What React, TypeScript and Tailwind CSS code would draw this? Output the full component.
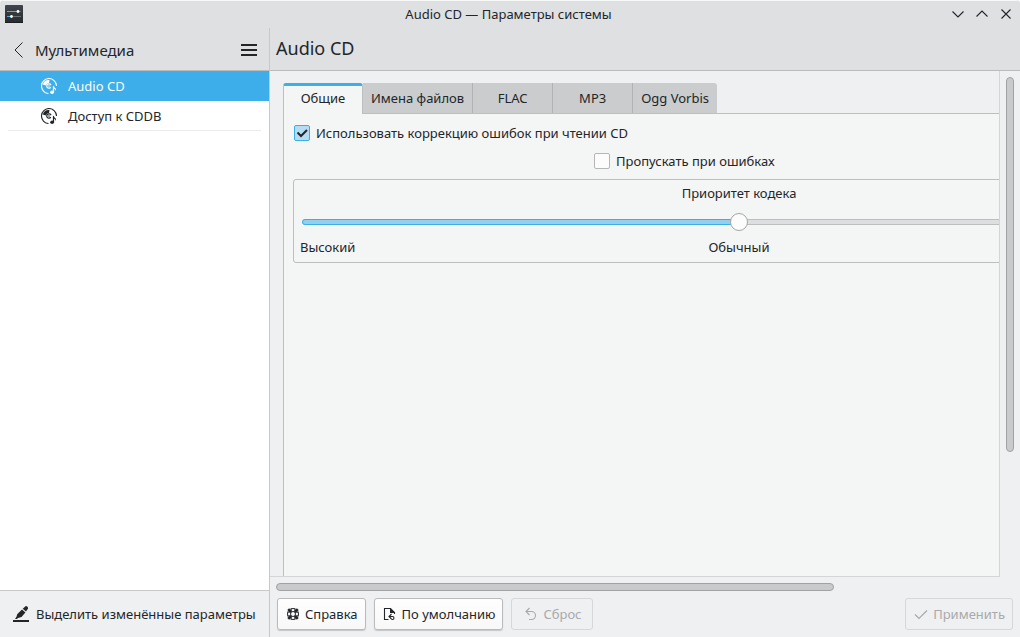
import React, { useState } from 'react';
import clsx from 'clsx';

const modules = ['Audio CD', 'Доступ к CDDB'];
const tabs = ['Общие', 'Имена файлов', 'FLAC', 'MP3', 'Ogg Vorbis'];

function AppIcon() {
  return (
    <svg width="18" height="18" viewBox="0 0 18 18" aria-hidden="true">
      <defs>
        <linearGradient id="app-bg" x1="0" y1="0" x2="0" y2="1">
          <stop offset="0" stopColor="#3f464c" />
          <stop offset="1" stopColor="#272b2f" />
        </linearGradient>
      </defs>
      <rect width="18" height="18" rx="1" fill="url(#app-bg)" />
      <path d="M0 17.5h18" stroke="#1c1f22" />
      <path d="M2 6.5h10M2 11.5h4" stroke="#3daee9" />
      <path d="M14 6.5h2M8 11.5h8" stroke="#6b7277" />
      <circle cx="13" cy="6.5" r="1.4" fill="#fff" />
      <circle cx="6.5" cy="11.5" r="1.4" fill="#fff" />
    </svg>
  );
}

function DiscIcon() {
  return (
    <svg width="16" height="16" viewBox="0 0 16 16" fill="none" aria-hidden="true">
      <path d="M7.500 15.500A7.500 7.500 0 1 1 15.500 8" stroke="currentColor" strokeWidth="1.100" />
      <path d="M1.800 6.500A6.200 6.200 0 0 1 8.500 2L8 5A3 3 0 0 0 5 7.500z" fill="currentColor" />
      <path d="M9.800 9.200A2.200 2.200 0 1 1 10 7.200" stroke="currentColor" strokeWidth="1.200" />
      <circle cx="8" cy="8" r=".8" fill="currentColor" />
      <path d="M12.500 14.500V8" stroke="currentColor" strokeWidth="1.200" />
      <path d="M12 7.500c.5 1.800 3.800 2.300 3 5.500-.4-1.500-1.500-2.200-3-2.500z" fill="currentColor" />
      <ellipse cx="11.100" cy="14.200" rx="1.900" ry="1.700" fill="currentColor" />
    </svg>
  );
}

function MarkerIcon() {
  return (
    <svg width="16" height="16" viewBox="0 0 16 16" fill="currentColor" aria-hidden="true">
      <path d="M0 14h16v2H0z" />
      <path d="M12.800 0c1.400.2 2.300 1.200 2.300 2.500L13 5.500 9.700 2.700z" />
      <path d="m9 3.500 3.400 2.900-3.900 4.600-3.400.9L3.800 13H2l1.500-2.200.7-2.600z" />
    </svg>
  );
}

function HelpIcon() {
  return (
    <svg width="16" height="16" viewBox="0 0 16 16" fill="none" stroke="currentColor" aria-hidden="true">
      <circle cx="8" cy="8" r="5.500" />
      <circle cx="8" cy="8" r="2.500" />
      <path d="m3.200 3.200 3 3M12.800 3.200l-3 3M12.800 12.800l-3-3M3.200 12.800l3-3" strokeWidth="2.600" />
      <path d="M6.500 2.500v3M9.500 2.500v3M6.500 10.500v3M9.500 10.500v3M2.500 6.500h3M2.500 9.500h3M10.500 6.500h3M10.500 9.500h3" strokeWidth=".6" />
    </svg>
  );
}

function DefaultsIcon() {
  return (
    <svg width="16" height="16" viewBox="0 0 16 16" fill="none" stroke="currentColor" aria-hidden="true">
      <path d="M6.500 13.500h-4v-11h6l4 4V8" strokeWidth="1.100" />
      <path d="M8 2v5h5z" fill="currentColor" stroke="none" />
      <path d="M9.500 8 7 10.500 9.500 13M7 10.500h3.500a1.500 1.500 0 0 1 0 3H9.500" strokeWidth="1.100" />
    </svg>
  );
}

function ResetIcon() {
  return (
    <svg width="16" height="16" viewBox="0 0 16 16" fill="none" stroke="currentColor" aria-hidden="true">
      <path d="M6.500 2 3 5.500 6.500 9M3 5.500h5.500a4 4 0 0 1 0 8H6" strokeWidth="1.100" />
    </svg>
  );
}

function ApplyIcon() {
  return (
    <svg width="16" height="16" viewBox="0 0 16 16" fill="none" stroke="currentColor" aria-hidden="true">
      <path d="m2 8.500 4 4 8-8" strokeWidth="1.200" />
    </svg>
  );
}

interface ActionButtonProps {
  icon: React.ReactNode;
  label: string;
  disabled?: boolean;
}

function ActionButton({ icon, label, disabled }: ActionButtonProps) {
  return (
    <button
      disabled={disabled}
      className={clsx(
        'flex h-8 min-w-[82px] items-center justify-center gap-1 rounded-[3px] border px-[7px] whitespace-nowrap',
        disabled
          ? 'border-[#d5d7d8] bg-[#eff0f1] text-[#a8aaac]'
          : 'border-[#b9bbbd] bg-linear-to-b from-[#fefefe] to-[#f8f8f8] shadow-[0_1px_1px_#c4c6c8]'
      )}
    >
      {icon}
      {label}
    </button>
  );
}

interface CheckOptionProps {
  label: string;
  defaultChecked?: boolean;
}

function CheckOption({ label, defaultChecked }: CheckOptionProps) {
  return (
    <label className="flex h-5 w-fit items-center gap-1.5">
      <span className="grid size-4">
        <input
          type="checkbox"
          defaultChecked={defaultChecked}
          className="peer size-4 appearance-none rounded-[2px] border border-[#b4b6b8] bg-[#fcfcfc] [grid-area:1/1] checked:border-[#3daee9] checked:bg-[#b5dcf1]"
        />
        <svg
          viewBox="0 0 16 16"
          fill="none"
          className="pointer-events-none invisible size-4 [grid-area:1/1] peer-checked:visible"
        >
          <path d="m3.500 7.500 3.500 3.500 6-6" stroke="#232629" strokeWidth="2" />
        </svg>
      </span>
      {label}
    </label>
  );
}

function Sidebar() {
  const [current, setCurrent] = useState(0);

  return (
    <aside className="flex w-[270px] shrink-0 flex-col border-r border-[#c6c8ca] bg-white">
      <header className="flex h-[43px] items-center border-b border-[#b9bbbd] bg-[#dee0e2] pt-px pr-3 pl-[11px]">
        <button className="flex flex-1 items-center gap-2 text-[15px] leading-6">
          <svg width="16" height="16" viewBox="0 0 16 16" fill="none" stroke="currentColor" aria-hidden="true">
            <path d="M11.500.5 4 8l7.500 7.500" />
          </svg>
          Мультимедиа
        </button>
        <button aria-label="Меню">
          <svg width="16" height="16" viewBox="0 0 16 16" fill="currentColor" aria-hidden="true">
            <path d="M0 2h16v2H0zM0 7h16v2H0zM0 12h16v2H0z" />
          </svg>
        </button>
      </header>

      <nav className="flex-1">
        {modules.map((name, i) => (
          <button
            key={name}
            onClick={() => setCurrent(i)}
            className={clsx('block w-full', i === current ? 'bg-[#3daee9] text-[#fcfcfc]' : 'px-2')}
          >
            <span
              className={clsx(
                'flex h-[30px] items-center gap-[11px]',
                i === current ? 'pl-[41px]' : 'border-b border-[#eaebec] pl-[33px]'
              )}
            >
              <DiscIcon />
              {name}
            </span>
          </button>
        ))}
      </nav>

      <footer className="border-t border-[#c6c8ca] bg-[#eff0f1]">
        <button className="flex h-[46px] items-center gap-[7px] pl-[13px] whitespace-nowrap">
          <MarkerIcon />
          Выделить изменённые параметры
        </button>
      </footer>
    </aside>
  );
}

function CodecPriority() {
  const [value, setValue] = useState(50);

  return (
    <fieldset className="mt-2 flex h-[84px] flex-col rounded-[3px] border border-[#bcbebf] px-1.5 pt-[3px]">
      <label htmlFor="priority" className="text-center">
        Приоритет кодека
      </label>
      <div className="mx-0.5 grid h-[38px] items-center">
        <div className="h-1.5 rounded-full border border-[#bcbebf] bg-[#dcdedf] [grid-area:1/1]">
          <div
            className="-m-px h-1.5 rounded-full border border-[#3daee9] bg-[#93cfee]"
            style={{ width: `${value}%` }}
          />
        </div>
        <input
          id="priority"
          type="range"
          value={value}
          onChange={(e) => setValue(Number(e.target.value))}
          className="h-[18px] appearance-none bg-transparent [grid-area:1/1] [&::-webkit-slider-thumb]:size-[18px] [&::-webkit-slider-thumb]:appearance-none [&::-webkit-slider-thumb]:rounded-full [&::-webkit-slider-thumb]:border [&::-webkit-slider-thumb]:border-[#a3a5a7] [&::-webkit-slider-thumb]:bg-[#fcfcfc]"
        />
      </div>
      <div className="-mt-1 grid grid-cols-3">
        <span>Высокий</span>
        <span className="text-center">Обычный</span>
      </div>
    </fieldset>
  );
}

function AudioPage() {
  const [tab, setTab] = useState(0);

  return (
    <div className="flex h-full w-[924px] flex-col pt-3 pl-[13px]">
      <div role="tablist" className="z-10 -mb-px flex h-[31px] items-start">
        {tabs.map((name, i) => (
          <button
            key={name}
            role="tab"
            aria-selected={i === tab}
            onClick={() => setTab(i)}
            className={clsx(
              'min-w-20 whitespace-nowrap last:rounded-tr-[3px]',
              i === tab
                ? 'h-[31px] rounded-t-[3px] border-x border-t-[3px] border-x-[#bcbebf] border-t-[#3daee9] bg-[#f4f5f5] px-2 pb-1'
                : 'h-[30px] border-r border-r-[#b0b2b4] bg-[#cacccd] px-2 last:border-r-0'
            )}
          >
            {name}
          </button>
        ))}
      </div>
      <div role="tabpanel" className="flex-1 border-t border-l border-[#bcbebf] bg-[#f4f5f5] px-[9px] pt-[9px]">
        <div className="px-px">
          <CheckOption label="Использовать коррекцию ошибок при чтении CD" defaultChecked />
        </div>
        <div className="mt-2 pl-[301px]">
          <CheckOption label="Пропускать при ошибках" />
        </div>
        <CodecPriority />
      </div>
    </div>
  );
}

export default function App() {
  return (
    <div className="flex h-screen flex-col overflow-hidden rounded-t-[4px] bg-[#eff0f1] font-['Noto_Sans',sans-serif] text-[13px] leading-5 text-[#232629]">
      <div className="grid h-7 shrink-0 grid-cols-[1fr_auto_1fr] items-center border-t border-[#f6f7f7] bg-[#dee0e2] pr-2 pb-px pl-[5px]">
        <AppIcon />
        <h1>Audio CD — Параметры системы</h1>
        <div className="flex justify-end gap-3">
          <button aria-label="Свернуть">
            <svg width="12" height="12" viewBox="0 0 12 12" fill="none" stroke="currentColor">
              <path d="m.5 3.500 5.500 5.500 5.500-5.500" strokeWidth="1.100" />
            </svg>
          </button>
          <button aria-label="Развернуть">
            <svg width="12" height="12" viewBox="0 0 12 12" fill="none" stroke="currentColor">
              <path d="M.5 8.500 6 3l5.500 5.500" strokeWidth="1.100" />
            </svg>
          </button>
          <button aria-label="Закрыть">
            <svg width="12" height="12" viewBox="0 0 12 12" fill="none" stroke="currentColor">
              <path d="m1.500 1.500 9 9M10.500 1.500l-9 9" strokeWidth="1.100" />
            </svg>
          </button>
        </div>
      </div>

      <div className="flex min-h-0 flex-1">
        <Sidebar />
        <main className="flex min-w-0 flex-1 flex-col">
          <header className="flex h-[43px] shrink-0 items-center border-b border-[#b9bbbd] bg-[#dee0e2] px-1.5 pb-0.5">
            <h2 className="text-[18px]">Audio CD</h2>
          </header>

          <div className="grid min-h-0 flex-1 grid-cols-[minmax(0,1fr)_20px] grid-rows-[minmax(0,1fr)_21px]">
            <div className="overflow-hidden border-r border-b border-[#d3d5d6]">
              <AudioPage />
            </div>
            <div className="px-1.5 py-1.5">
              <div className="h-[76%] w-2 rounded-full border border-[#a0a2a4] bg-[#c8cacb]" />
            </div>
            <div className="px-1.5 pt-1.5">
              <div className="h-2 w-7/9 rounded-full border border-[#a0a2a4] bg-[#c8cacb]" />
            </div>
          </div>

          <footer className="flex shrink-0 gap-2 px-[7px] pb-[7px]">
            <ActionButton icon={<HelpIcon />} label="Справка" />
            <ActionButton icon={<DefaultsIcon />} label="По умолчанию" />
            <ActionButton icon={<ResetIcon />} label="Сброс" disabled />
            <div className="ml-auto">
              <ActionButton icon={<ApplyIcon />} label="Применить" disabled />
            </div>
          </footer>
        </main>
      </div>
    </div>
  );
}
